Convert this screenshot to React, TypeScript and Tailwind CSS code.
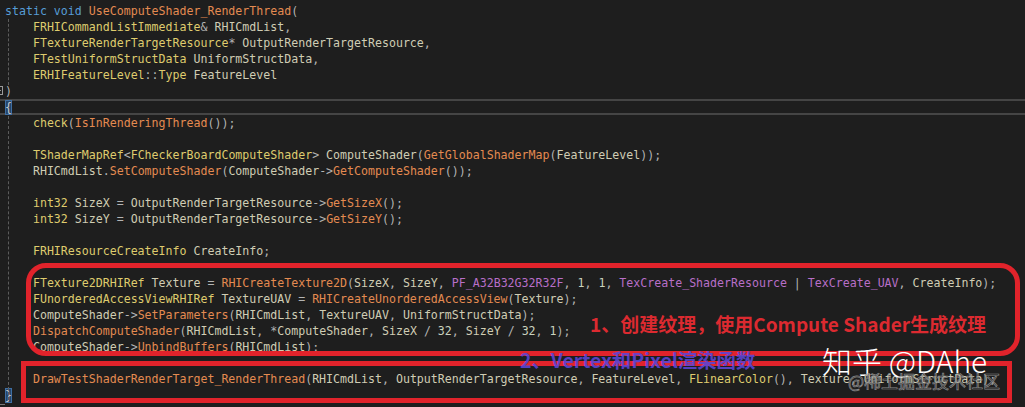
import React from "react";

const COLORS: Record<string, string> = {
  k: "text-[#569cd6]",
  f: "text-[#e48b51]",
  t: "text-[#dfcc6e]",
  v: "text-[#d0cdb4]",
  p: "text-[#b4b4b4]",
  m: "text-[#b86fc8]",
  n: "text-[#c9d3bf]",
};

// each line: tokens split by "~", token = "<colour key>:<text>"
const SOURCE = [
  "k:static void ~f:UseComputeShader_RenderThread~p:(",
  "p:    ~t:FRHICommandListImmediate~p:& ~v:RHICmdList~p:,",
  "p:    ~t:FTextureRenderTargetResource~p:* ~v:OutputRenderTargetResource~p:,",
  "p:    ~t:FTestUniformStructData ~v:UniformStructData~p:,",
  "p:    ~t:ERHIFeatureLevel~p:::~t:Type ~v:FeatureLevel",
  "p:)",
  "B:{",
  "p:    ~t:check~p:(~f:IsInRenderingThread~p:());",
  "",
  "p:    ~t:TShaderMapRef~p:<~t:FCheckerBoardComputeShader~p:> ~v:ComputeShader~p:(~f:GetGlobalShaderMap~p:(~v:FeatureLevel~p:));",
  "p:    ~v:RHICmdList~p:.~f:SetComputeShader~p:(~v:ComputeShader~p:->~f:GetComputeShader~p:());",
  "",
  "p:    ~t:int32 ~v:SizeX ~p:= ~v:OutputRenderTargetResource~p:->~f:GetSizeX~p:();",
  "p:    ~t:int32 ~v:SizeY ~p:= ~v:OutputRenderTargetResource~p:->~f:GetSizeY~p:();",
  "",
  "p:    ~t:FRHIResourceCreateInfo ~v:CreateInfo~p:;",
  "",
  "p:    ~t:FTexture2DRHIRef ~v:Texture ~p:= ~f:RHICreateTexture2D~p:(~v:SizeX~p:, ~v:SizeY~p:, ~m:PF_A32B32G32R32F~p:, ~n:1~p:, ~n:1~p:, ~m:TexCreate_ShaderResource ~p:| ~m:TexCreate_UAV~p:, ~v:CreateInfo~p:);",
  "p:    ~t:FUnorderedAccessViewRHIRef ~v:TextureUAV ~p:= ~f:RHICreateUnorderedAccessView~p:(~v:Texture~p:);",
  "p:    ~v:ComputeShader~p:->~f:SetParameters~p:(~v:RHICmdList~p:, ~v:TextureUAV~p:, ~v:UniformStructData~p:);",
  "p:    ~f:DispatchComputeShader~p:(~v:RHICmdList~p:, *~v:ComputeShader~p:, ~v:SizeX ~p:/ ~n:32~p:, ~v:SizeY ~p:/ ~n:32~p:, ~n:1~p:);",
  "p:    ~v:ComputeShader~p:->~f:UnbindBuffers~p:(~v:RHICmdList~p:);",
  "",
  "p:    ~f:DrawTestShaderRenderTarget_RenderThread~p:(~v:RHICmdList~p:, ~v:OutputRenderTargetResource~p:, ~v:FeatureLevel~p:, ~t:FLinearColor~p:(), ~v:Texture~p:, ~v:UniformStructData~p:);",
  "B:}",
];

function CodeLine({ src, current }: { src: string; current?: boolean }) {
  const tokens = src ? src.split("~") : [];
  return (
    <div
      className={`h-[16px] leading-[16px] pl-[5px] whitespace-pre ${
        current ? "shadow-[inset_0_2px_0_#454545,inset_0_-2px_0_#454545]" : ""
      }`}
    >
      {tokens.map((tok, i) => {
        const at = tok.indexOf(":");
        const key = tok.slice(0, at);
        const text = tok.slice(at + 1);
        if (key === "B") {
          return (
            <span
              key={i}
              className="inline-block h-[15px] leading-[15px] bg-[#26456a] text-[#c8c8c8] shadow-[inset_0_0_0_1px_#3f6fa3]"
            >
              {text}
            </span>
          );
        }
        return (
          <span key={i} className={COLORS[key]}>
            {text}
          </span>
        );
      })}
    </div>
  );
}

export default function App() {
  return (
    <div className="relative w-[1025px] h-[407px] overflow-hidden bg-[#1e1e1e] font-['DejaVu_Sans_Mono',monospace] text-[11.6px]">
      {/* outlining margin */}
      <div className="absolute left-[8px] top-[19px] h-[66px] border-l border-dashed border-[#5c5c5c]" />
      <div className="absolute left-[8px] top-[116px] h-[284px] border-l border-dashed border-[#5c5c5c]" />
      <div className="absolute left-0 top-[404px] w-[5px] border-t border-[#777]" />
      <div className="absolute left-[-6px] top-[86px] w-[9px] h-[9px] border border-[#9a9a9a] flex items-center justify-center">
        <div className="w-[5px] border-t border-[#9a9a9a]" />
      </div>

      <div className="pt-[3px] flex flex-col">
        {SOURCE.map((line, i) => (
          <CodeLine key={i} src={line} current={i === 6} />
        ))}
      </div>

      {/* annotation boxes */}
      <div className="absolute left-[26px] top-[263px] w-[994px] h-[93px] rounded-[20px] border-[5px] border-[#e1232b]" />
      <div className="absolute left-[21px] top-[361px] w-[991px] h-[42px] border-[5px] border-[#e1232b]" />

      <div className="absolute left-[590px] top-[313px] text-[19px] leading-[22px] font-bold text-[#dc2a30] font-['Noto_Sans_CJK_SC',sans-serif] whitespace-nowrap">
        1、创建纹理，使用Compute Shader生成纹理
      </div>
      <div className="absolute left-[520px] top-[349px] text-[19.4px] leading-[22px] font-bold text-[#5a46d8]/90 font-['Noto_Sans_CJK_SC',sans-serif] whitespace-nowrap">
        2、Vertex和Pixel渲染函数
      </div>

      {/* watermarks */}
      <div className="absolute left-[822px] top-[342px] text-[30px] leading-[36px] font-light text-white font-['Noto_Sans_CJK_SC',sans-serif] whitespace-nowrap">
        知乎 @DAhe
      </div>
      <div className="absolute left-[848px] top-[371px] text-[17px] leading-[20px] text-transparent [-webkit-text-stroke:0.7px_#8c8c8c] font-['Noto_Sans_CJK_SC',sans-serif] whitespace-nowrap">
        @稀土掘金技术社区
      </div>
    </div>
  );
}
